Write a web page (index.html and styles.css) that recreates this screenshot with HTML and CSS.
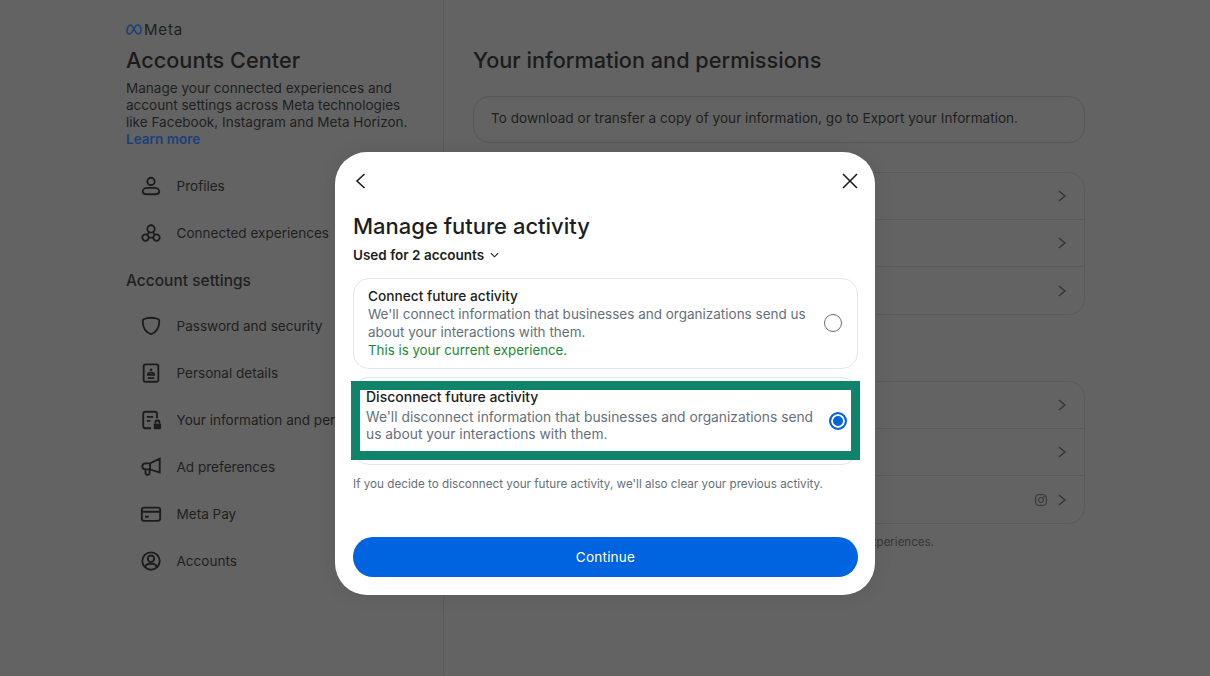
FILE: index.html
```html
<!DOCTYPE html>
<html lang="en">
<head>
    <meta charset="UTF-8">
    <meta name="viewport" content="width=device-width, initial-scale=1.0">
    <title>Accounts Center</title>
    <link rel="stylesheet" href="styles.css">
</head>
<body>
    <div class="page">
        <aside class="sidebar">
            <div class="brand">
                <svg class="brand-mark" viewBox="0 0 16 11" width="16" height="11"><path d="M1 7.500C1 4 2.600 1 4.500 1c3 0 4.500 9 7.500 9 1.900 0 3-1.700 3-4.200C15 3 13.600 1 11.500 1 8.500 1 6.500 10 3.500 10 2 10 1 9 1 7.500z" fill="none" stroke="#1c3f78" stroke-width="1.500"/></svg>
                <span>Meta</span>
            </div>
            <h1 class="side-title">Accounts Center</h1>
            <p class="side-text">Manage your connected experiences and account settings across Meta technologies like Facebook, Instagram and Meta Horizon. <a class="learn" href="#">Learn more</a></p>

            <ul class="nav nav-top">
                <li class="nav-item">
                    <svg class="nav-icon" viewBox="0 0 24 24"><circle cx="12" cy="7" r="4"/><path d="M8 14h8c2.800 0 5 1.700 5 4 0 2-1.500 3-4 3H7c-2.500 0-4-1-4-3 0-2.300 2.200-4 5-4z"/></svg>
                    <span>Profiles</span>
                </li>
                <li class="nav-item">
                    <svg class="nav-icon" viewBox="0 0 24 24"><circle cx="12" cy="7.500" r="4"/><circle cx="6" cy="17" r="3.500"/><circle cx="18" cy="17" r="3.500"/><path d="M9.500 17h5M10 11l-2 3M14 11l2 3"/></svg>
                    <span>Connected experiences</span>
                </li>
            </ul>

            <h2 class="side-heading">Account settings</h2>

            <ul class="nav">
                <li class="nav-item">
                    <svg class="nav-icon" viewBox="0 0 24 24"><path d="M12 3c3 0 6 .6 8 1.600 1 .5 1 1.200 1 2.400 0 7-3.500 11.700-9 14-5.500-2.300-9-7-9-14 0-1.200 0-1.900 1-2.400C6 3.600 9 3 12 3z"/></svg>
                    <span>Password and security</span>
                </li>
                <li class="nav-item">
                    <svg class="nav-icon" viewBox="0 0 24 24"><rect x="4" y="2.500" width="16" height="19" rx="2"/><circle cx="12" cy="8.500" r="1.400" class="solid"/><path d="M8.500 14c0-1.500 1.500-2.500 3.500-2.500s3.500 1 3.500 2.500zM8.500 17.500h7"/></svg>
                    <span>Personal details</span>
                </li>
                <li class="nav-item">
                    <svg class="nav-icon" viewBox="0 0 24 24"><path d="M12 21H6c-1.500 0-2.500-1-2.500-2.500v-13C3.500 4 4.500 3 6 3h10c1.500 0 2.500 1 2.500 2.500V10M7.500 8.500h7M7.500 13h4"/><rect x="15" y="16" width="8" height="6" rx="1" class="solid"/><path d="M16.800 16v-1.800c0-1 1-1.700 2.200-1.700s2.200.7 2.200 1.700V16"/></svg>
                    <span>Your information and permissions</span>
                </li>
                <li class="nav-item">
                    <svg class="nav-icon" viewBox="0 0 24 24"><path d="M21.500 3v15L11 14.500H6c-2 0-3.500-1.300-3.500-3.300S4 8 6 8h5zM11 8v6.500M6 14.500v3.500c0 1.500 1 2.500 2.300 2.500s2.200-1 2.200-2.500v-3.500"/></svg>
                    <span>Ad preferences</span>
                </li>
                <li class="nav-item">
                    <svg class="nav-icon" viewBox="0 0 24 24"><rect x="2" y="5" width="20" height="14.500" rx="2.500"/><path d="M2 9.500h20M5.500 15h4"/></svg>
                    <span>Meta Pay</span>
                </li>
                <li class="nav-item">
                    <svg class="nav-icon" viewBox="0 0 24 24"><circle cx="12" cy="12" r="9.500"/><circle cx="12" cy="9.500" r="3.500"/><path d="M5.500 19c.6-2.500 2.500-3.800 4.500-3.800h4c2 0 3.900 1.300 4.500 3.800"/></svg>
                    <span>Accounts</span>
                </li>
            </ul>
        </aside>

        <main class="content">
            <h2 class="content-title">Your information and permissions</h2>
            <div class="info-box">To download or transfer a copy of your information, go to Export your Information.</div>

            <div class="row-card row-card-first">
                <div class="row"><svg class="chev" viewBox="0 0 10 14"><path d="M2 2l6 5-6 5"/></svg></div>
                <div class="row"><svg class="chev" viewBox="0 0 10 14"><path d="M2 2l6 5-6 5"/></svg></div>
                <div class="row"><svg class="chev" viewBox="0 0 10 14"><path d="M2 2l6 5-6 5"/></svg></div>
            </div>

            <div class="row-card row-card-second">
                <div class="row"><svg class="chev" viewBox="0 0 10 14"><path d="M2 2l6 5-6 5"/></svg></div>
                <div class="row"><svg class="chev" viewBox="0 0 10 14"><path d="M2 2l6 5-6 5"/></svg></div>
                <div class="row">
                    <svg class="insta" viewBox="0 0 12 12"><rect x=".6" y=".6" width="10.800" height="10.800" rx="3"/><circle cx="6" cy="6" r="2.500"/><circle cx="9" cy="3" r=".4"/></svg>
                    <svg class="chev" viewBox="0 0 10 14"><path d="M2 2l6 5-6 5"/></svg>
                </div>
            </div>
            <p class="footnote">Your information is used to personalize your Meta experiences.</p>
        </main>
    </div>

    <div class="overlay">
        <div class="modal">
            <div class="modal-top">
                <svg class="modal-icon" viewBox="0 0 16 16"><path d="M11.500 1 4 8l7.500 7"/></svg>
                <svg class="modal-icon modal-close" viewBox="0 0 16 16"><path d="M1 1l14 14M15 1 1 15"/></svg>
            </div>
            <h2 class="modal-title">Manage future activity</h2>
            <div class="used-for">
                <span>Used for 2 accounts</span>
                <svg class="caret" viewBox="0 0 10 6"><path d="M1 1l4 4 4-4"/></svg>
            </div>

            <div class="option">
                <div class="option-text">
                    <div class="option-name">Connect future activity</div>
                    <div class="option-desc">We'll connect information that businesses and organizations send us about your interactions with them.</div>
                    <div class="option-current">This is your current experience.</div>
                </div>
                <span class="radio"></span>
            </div>

            <div class="option option-second">
                <div class="highlight">
                    <div class="option-text">
                        <div class="option-name">Disconnect future activity</div>
                        <div class="option-desc">We'll disconnect information that businesses and organizations send us about your interactions with them.</div>
                    </div>
                    <span class="radio radio-on"></span>
                </div>
            </div>

            <p class="note">If you decide to disconnect your future activity, we'll also clear your previous activity.</p>
            <button class="continue">Continue</button>
        </div>
    </div>
</body>
</html>
```

FILE: styles.css
```css
* {
    box-sizing: border-box;
}

body {
    margin: 0;
    height: 676px;
    overflow: hidden;
    background-color: #636363;
    color: #1f1f1f;
    font-family: Inter, "Liberation Sans", sans-serif;
    font-size: 13.55px;
}

h1, h2, p, ul {
    margin: 0;
    padding: 0;
}

.page {
    display: flex;
    height: 676px;
}

/* left column */
.sidebar {
    width: 444px;
    padding: 21px 20px 0 126px;
    border-right: 1px solid #5a5a5a;
}

.brand {
    display: flex;
    align-items: center;
    gap: 2px;
    height: 16px;
    font-size: 15px;
    letter-spacing: 0.8px;
    color: #1f1f1f;
}

.brand-mark {
    flex-shrink: 0;
}

.side-title {
    margin-top: 9px;
    font-size: 21.7px;
    line-height: 28px;
    font-weight: 500;
    color: #1b1b1b;
}

.side-text {
    margin-top: 6px;
    width: 290px;
    line-height: 17px;
    color: #1f1f1f;
}

.learn {
    display: block;
    color: #1c3f78;
    font-weight: 600;
    text-decoration: none;
}

.nav {
    list-style: none;
}

.nav-top {
    margin-top: 14px;
}

.nav-item {
    display: flex;
    align-items: center;
    gap: 14.5px;
    height: 47px;
    padding-left: 14px;
    white-space: nowrap;
    color: #1f1f1f;
}

.nav-icon {
    width: 22px;
    height: 22px;
    flex-shrink: 0;
    fill: none;
    stroke: #1c1c1c;
    stroke-width: 2;
}

.nav-icon .solid {
    fill: #1c1c1c;
    stroke: none;
}

.side-heading {
    margin-top: 15px;
    margin-bottom: 11px;
    font-size: 15.5px;
    line-height: 20px;
    font-weight: 500;
    color: #1f1f1f;
}

/* right column */
.content {
    width: 641px;
    padding: 46px 0 0 29px;
}

.content-title {
    font-size: 21.7px;
    line-height: 28px;
    font-weight: 500;
    color: #1b1b1b;
}

.info-box {
    display: flex;
    align-items: center;
    height: 47px;
    margin-top: 22px;
    padding: 0 0 3px 17px;
    border: 1px solid #565656;
    border-radius: 16px;
    color: #1f1f1f;
    letter-spacing: 0.03px;
}

.row-card {
    border: 1px solid #5a5a5a;
    border-radius: 16px;
}

.row-card-first {
    margin-top: 29px;
}

.row-card-second {
    margin-top: 66px;
}

.row {
    display: flex;
    align-items: center;
    justify-content: flex-end;
    gap: 10px;
    height: 47px;
    padding-right: 17px;
    border-bottom: 1px solid #5a5a5a;
}

.row:last-child {
    border-bottom: none;
}

.chev {
    width: 10px;
    height: 14px;
    fill: none;
    stroke: #333333;
    stroke-width: 1.3;
}

.insta {
    width: 12px;
    height: 12px;
    fill: none;
    stroke: #333333;
    stroke-width: 1;
}

.footnote {
    margin-top: 11px;
    padding-left: 118px;
    font-size: 11.5px;
    line-height: 14px;
    color: #363636;
    white-space: nowrap;
}

/* dialog on top */
.overlay {
    position: absolute;
    top: 0;
    left: 0;
    width: 1210px;
    height: 676px;
    display: flex;
    justify-content: center;
    padding-top: 152px;
}

.modal {
    width: 540px;
    height: 443px;
    padding: 21px 18px 0;
    background-color: #fff;
    border-radius: 32px;
    box-shadow: 0 0 20px rgba(0, 0, 0, 0.08);
}

.modal-top {
    display: flex;
    justify-content: space-between;
    height: 16px;
}

.modal-icon {
    width: 16px;
    height: 16px;
    fill: none;
    stroke: #1c1e21;
    stroke-width: 1.6;
}

.modal-close {
    margin-right: -1px;
}

.modal-title {
    margin-top: 23px;
    font-size: 22px;
    line-height: 28px;
    font-weight: 500;
    color: #1c1e21;
}

.used-for {
    display: flex;
    align-items: center;
    gap: 6px;
    margin-top: 6px;
    height: 18px;
    font-weight: 600;
    font-size: 13.5px;
    color: #1c1e21;
}

.caret {
    width: 9px;
    height: 6px;
    fill: none;
    stroke: #1c1e21;
    stroke-width: 1.2;
}

.option {
    display: flex;
    align-items: center;
    justify-content: space-between;
    width: 505px;
    height: 91px;
    margin-top: 14px;
    padding: 0 15px 2px 14px;
    border: 1px solid #e2e5e9;
    border-radius: 16px;
}

.option-second {
    position: relative;
    height: 88px;
    margin-top: 8px;
    padding: 0;
}

.option-text {
    width: 450px;
    font-size: 13.5px;
}

.option-name {
    line-height: 18px;
    font-size: 13.7px;
    font-weight: 500;
    color: #1c1e21;
}

.option-desc {
    line-height: 18px;
    color: #65707c;
}

.option-current {
    line-height: 18px;
    font-size: 13.3px;
    color: #1c8a3a;
}

.radio {
    flex-shrink: 0;
    width: 18px;
    height: 18px;
    border: 1.5px solid #65707c;
    border-radius: 50%;
}

.radio-on {
    background-color: #0064e0;
    border: 2px solid #0064e0;
    box-shadow: inset 0 0 0 2px #fff;
}

.highlight {
    position: absolute;
    top: 3px;
    left: -3px;
    width: 509px;
    height: 79px;
    display: flex;
    align-items: center;
    justify-content: space-between;
    padding: 0 4px 0 6px;
    background-color: #fff;
    border: 9px solid #10846a;
}

.highlight .option-text {
    align-self: flex-start;
    width: 456px;
}

.highlight .option-name {
    margin-top: -1px;
    margin-bottom: 4px;
    font-size: 14px;
    line-height: 16px;
}

.highlight .option-desc {
    font-size: 13.8px;
    line-height: 17px;
}

.note {
    margin-top: 12px;
    font-size: 11.7px;
    line-height: 14px;
    color: #65707c;
}

.continue {
    display: block;
    width: 505px;
    height: 40px;
    margin-top: 46px;
    border: none;
    border-radius: 20px;
    background-color: #0064e0;
    color: #fff;
    font-family: inherit;
    font-size: 13.6px;
    letter-spacing: 0.2px;
}
```
